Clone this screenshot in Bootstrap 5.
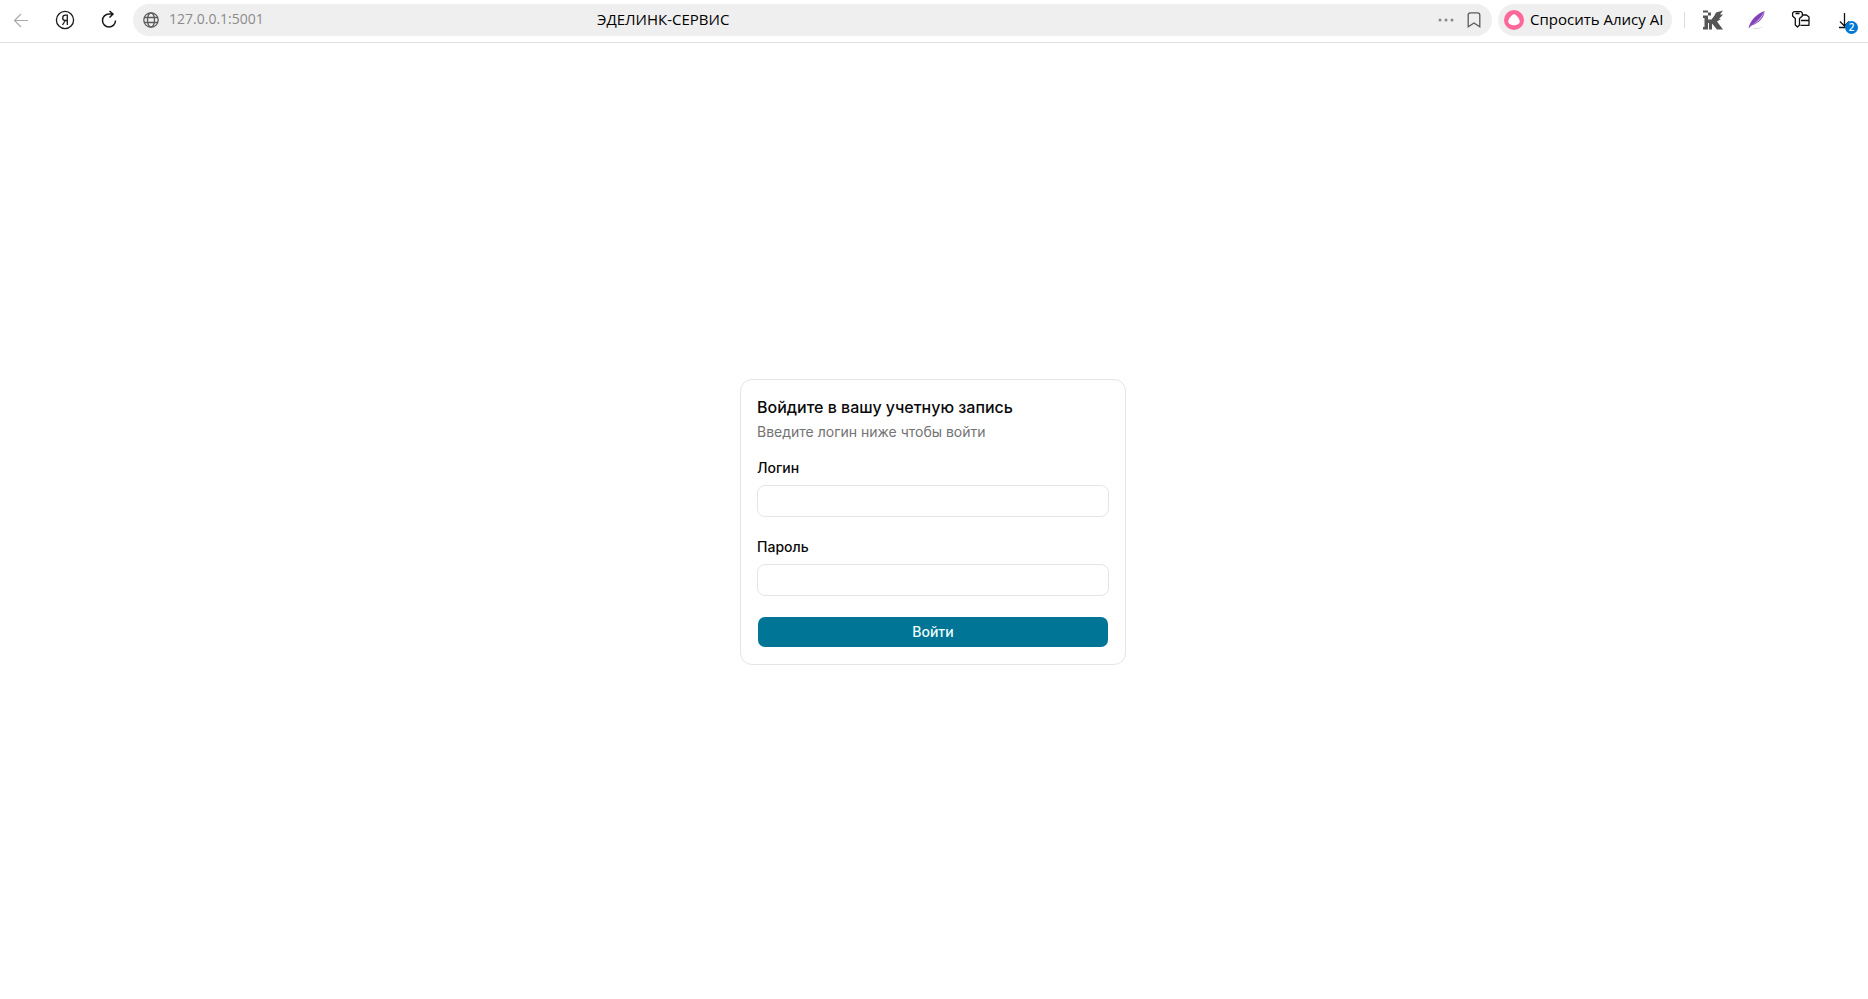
<!DOCTYPE html>
<html lang="ru">
<head>
<meta charset="utf-8">
<meta name="viewport" content="width=device-width, initial-scale=1">
<title>ЭДЕЛИНК-СЕРВИС</title>
<link rel="stylesheet" href="https://cdn.jsdelivr.net/npm/bootstrap@5.3.0/dist/css/bootstrap.min.css">
<style>
  body { font-family: Inter, "Liberation Sans", sans-serif; color: #0a0a0a; background: #fff; }
  .toolbar { height: 43px; border-bottom: 1px solid #e2e2e2; padding: 4px 1px 0 0; font-family: "Open Sans", "Noto Sans", sans-serif; font-size: 15px; line-height: 24px; color: #000; }
  .tool { width: 44px; height: 32px; padding: 0; border: 0; background: none; color: #1a1a1a; flex: none; display: flex; align-items: center; justify-content: center; }
  .tool svg, .address svg, .alice svg { display: block; flex: none; }
  .start-tools { padding-right: 2px; margin-left: -1px; }
  .address { height: 32px; border-radius: 16px; background: #efefef; padding: 0 4px 0 10px; }
  .address span { padding-bottom: 2px; }
  .host { color: #8b8b8b; width: 438px; padding-left: 10px; font-size: 14px; }
  .mini { width: 28px; height: 32px; padding: 0; border: 0; background: none; display: flex; align-items: center; justify-content: center; }
  .alice { width: 174px; height: 32px; border: 0; border-radius: 16px; background: #efefef; padding: 0 0 0 6px; margin-left: 6px; gap: 6px; color: #000; white-space: nowrap; }
  .alice span { padding-bottom: 2px; }
  .split { width: 1px; height: 16px; background: #dcdcdc; margin: 8px 6px 0 12px; }
  .count { position: absolute; left: 22px; top: 17px; width: 13px; height: 13px; border-radius: 7px; background: #0078d7; color: #fff; font-size: 10px; font-weight: 600; line-height: 13px; text-align: center; }
  main { padding: 2px 2px 0 0; }
  .login { width: 386px; border: 1px solid #e5e5e5; border-radius: 12px; padding: 16px; }
  .login h1 { font-size: 16px; line-height: 22px; font-weight: 500; margin: 0 0 4px; }
  .login p { font-size: 14px; line-height: 20px; color: #737373; margin: 0 0 16px; }
  .login label { font-size: 14px; line-height: 20px; font-weight: 500; margin-bottom: 7px; }
  .login .form-control { height: 32px; border-color: #e5e5e5; border-radius: 8px; margin-bottom: 20px; }
  .login .enter { height: 32px; background: #007595; background-clip: padding-box; color: #f0fdff; border: 1px solid transparent; border-radius: 8px; padding: 0; font-size: 14px; font-weight: 500; line-height: 20px; }
  .login .enter:hover { background-color: #00627d; color: #fff; }
</style>
</head>
<body class="d-flex flex-column min-vh-100">
<header class="toolbar d-flex align-items-start">
  <nav class="start-tools d-flex" aria-label="Навигация">
    <button class="tool" type="button" aria-label="Назад" disabled><svg width="20" height="20" viewBox="0 0 20 20" fill="none" stroke="#aaa" stroke-width="1.200"><path d="M17 10.500H4M10 4l-6.500 6.500L10 17"/></svg></button>
    <button class="tool" type="button" aria-label="Яндекс"><svg width="20" height="20" viewBox="0 0 20 20" fill="none" stroke="currentColor" stroke-width="1.300"><circle cx="10" cy="10" r="8.600"/><path d="M12.300 15V5.200H10.500C8.600 5.200 7.700 6.400 7.700 7.900 7.700 9.600 8.800 10.500 10.600 10.500H12.300M10.300 10.500L7.500 15"/></svg></button>
    <button class="tool" type="button" aria-label="Обновить"><svg width="20" height="20" viewBox="0 0 20 20" fill="none" stroke="currentColor" stroke-width="1.500"><path d="M16.500 10.500A6.500 6.500 0 1 1 10 4H14M10.500 1l3.500 3-3.500 3.500"/></svg></button>
  </nav>
  <div class="address d-flex align-items-center flex-grow-1">
    <svg width="16" height="16" viewBox="0 0 16 16" fill="none" stroke="#5c5c5c" stroke-width="1.300"><circle cx="8" cy="8" r="7.200"/><ellipse cx="8" cy="8" rx="3.500" ry="7.200"/><path d="M1.500 5.500h13M1.500 10.500h13"/></svg>
    <span class="host">127.0.0.1:5001</span>
    <span class="flex-grow-1">ЭДЕЛИНК-СЕРВИС</span>
    <button class="mini" type="button" aria-label="Меню страницы"><svg width="16" height="4" viewBox="0 0 16 4" fill="#888"><circle cx="2" cy="2" r="1.500"/><circle cx="8" cy="2" r="1.500"/><circle cx="14" cy="2" r="1.500"/></svg></button>
    <button class="mini" type="button" aria-label="Закладка"><svg width="14" height="16" viewBox="0 0 14 16" fill="none" stroke="#5c5c5c" stroke-width="1.300"><path d="M1.200 14.800V3A2.200 2.200 0 0 1 3.400.8h7.200A2.200 2.200 0 0 1 12.800 3v11.800L7 11z"/></svg></button>
  </div>
  <button class="alice d-flex align-items-center" type="button"><svg width="20" height="20" viewBox="0 0 20 20"><circle cx="10" cy="10" r="10" fill="#ff6699"/><path fill="#fff" d="M10 4.300c2.200 0 5.700 4.800 5.700 7.200 0 2.700-3 3.700-5.700 3.700s-5.700-1-5.700-3.700c0-2.400 3.500-7.200 5.700-7.200z"/></svg><span>Спросить Алису AI</span></button>
  <span class="split"></span>
  <div class="d-flex">
    <button class="tool" type="button" aria-label="K"><svg width="20" height="20" viewBox="0 0 20 20" fill="#555"><path d="M0 .5h5v2H0zM5 2.500h3v3H5zM0 5.500h5V8H0zM1.500 8H5v11.500H1.500zM0 17h1.500v2.500H0zM5 9.500h3.500l3-4 1.500-3L20 .5l-3 4h3l-4 4.500h2l-4 2.500 6 8h-6l-5-6v6H6V13H5z"/></svg></button>
    <button class="tool" type="button" aria-label="Перо"><svg width="20" height="20" viewBox="0 0 20 20"><path d="M4 19q6-2 12-1.500-6 1.500-12 1.500" fill="#ccc"/><path d="M1.500 18.500C3 11 9 4 17.500 1c0 6-5 12-13 14.500z" fill="#8242b8"/><path d="M4.500 15.500C12 12 16 7 17.500 1 13 9 9 12 4.500 15.500z" fill="#cda5ec"/></svg></button>
    <button class="tool" type="button" aria-label="Пароли"><svg width="20" height="20" viewBox="0 0 20 20" fill="none" stroke="#111" stroke-width="1.300" stroke-linejoin="round"><path d="M3 1.600h7l1.300 1.300v3L8.500 8.500V15L6.500 17l-2.200-2V8.500L1.600 6V3zM4.500 3.500h4M11 5h4.500L18 7v8.300H9.500M10 10.500h8"/></svg></button>
    <button class="tool position-relative" type="button" aria-label="Загрузки"><svg width="20" height="20" viewBox="0 0 20 20" fill="none" stroke="#111" stroke-width="1.300"><path d="M9.500 3v13M5 11.500l4.500 4.500 4.500-4.500M4 17.500h8"/></svg><span class="count">2</span></button>
  </div>
</header>
<main class="flex-grow-1 d-flex align-items-center justify-content-center">
  <form class="login">
    <h1>Войдите в вашу учетную запись</h1>
    <p>Введите логин ниже чтобы войти</p>
    <label class="d-block" for="login">Логин</label>
    <input class="form-control" id="login" type="text">
    <label class="d-block" for="password">Пароль</label>
    <input class="form-control" id="password" type="password">
    <button class="btn enter w-100" type="submit">Войти</button>
  </form>
</main>
<script src="https://cdn.jsdelivr.net/npm/bootstrap@5.3.0/dist/js/bootstrap.bundle.min.js"></script>
</body>
</html>
